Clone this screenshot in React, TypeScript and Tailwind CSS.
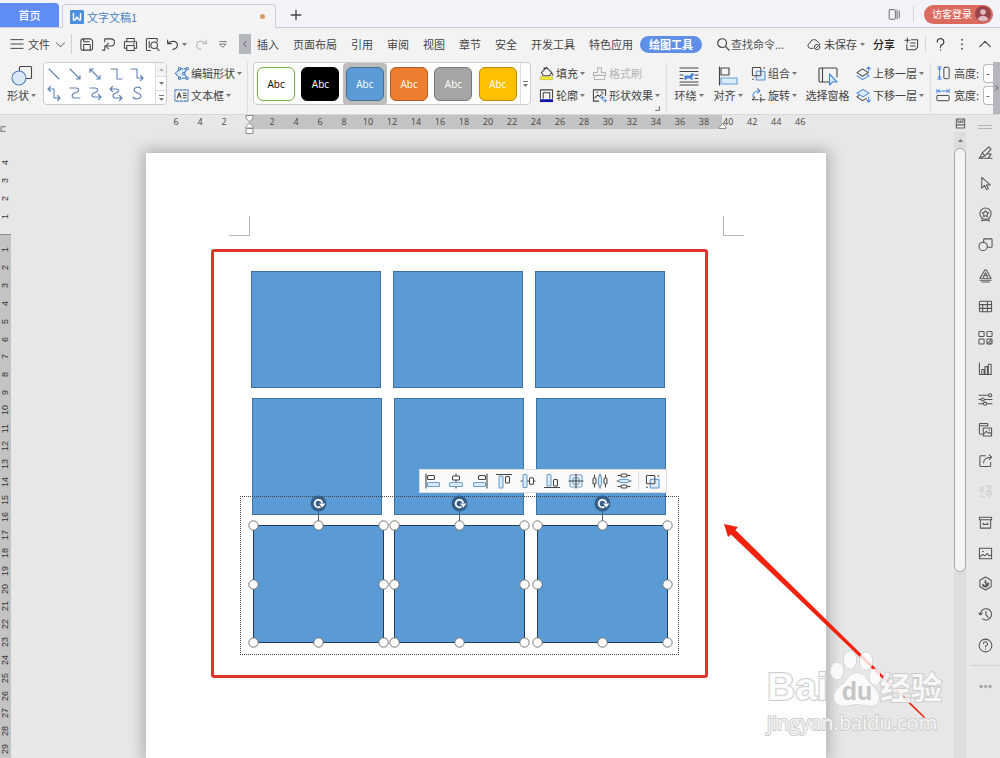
import { useState } from 'react';
import type { ReactNode } from 'react';
import clsx from 'clsx';

type IconProps = {
  children: ReactNode;
  className?: string;
  box?: string;
};

function Icon({ children, className = 'w-4 h-4', box = '0 0 16 16' }: IconProps) {
  return (
    <svg
      viewBox={box}
      className={clsx('shrink-0', className)}
      fill="none"
      stroke="currentColor"
      strokeWidth="1.1"
      strokeLinecap="round"
      strokeLinejoin="round"
      aria-hidden="true"
    >
      {children}
    </svg>
  );
}

function Caret({ className = 'text-[#777777]' }: { className?: string }) {
  return (
    <svg viewBox="0 0 5 3" className={clsx('w-[5px] h-[3px] shrink-0', className)} aria-hidden="true">
      <path d="M0 0h5L2.5 3z" fill="currentColor" />
    </svg>
  );
}

const menuTabs = ['插入', '页面布局', '引用', '审阅', '视图', '章节', '安全', '开发工具', '特色应用'];

const quickIcons = [
  {
    name: '保存',
    icon: (
      <>
        <path d="M2 4.500A2.500 2.500 0 0 1 4.500 2h8L14.500 4v8a2 2 0 0 1-2 2h-9A1.500 1.500 0 0 1 2 12.500z" />
        <path d="M5 14V8h7v6M5 2v3h6" />
      </>
    ),
  },
  {
    name: '输出为PDF',
    icon: (
      <>
        <path d="M4 5V2h6.500a3.800 3.800 0 0 1 0 7.600H5" />
        <path d="M8 6.500 5 9.600l3 3M1.500 14H4V9.600" />
      </>
    ),
  },
  {
    name: '打印',
    icon: (
      <>
        <path d="M4 5V1.500h8V5M4 12H1.500V5h13v7H12" />
        <path d="M4 9h8v5.500H4zM11 7.200h1" />
      </>
    ),
  },
  {
    name: '打印预览',
    icon: (
      <>
        <path d="M6 14.500H3A1.500 1.500 0 0 1 1.500 13V3A1.500 1.500 0 0 1 3 1.500h10V5M4.500 4.500v7" />
        <circle cx="9.800" cy="8.800" r="3.500" />
        <path d="m12.300 11.500 2.700 3" />
      </>
    ),
  },
];

const lineShapes = [
  'M3 3l10 10',
  'M3 3l10 10M9.500 13H13V9.500',
  'M3 3l10 10M9.500 13H13V9.500M6.500 3H3v3.500',
  'M3 3h6v10h5',
  'M2 3h6v9h6M11.500 9.500 14 12l-2.500 2.500',
  'M2 4h6v9h6M4.500 1.500 2 4l2.500 2.500M11.500 10.500 14 13l-2.500 2.500',
  'M3 3h6c4 0 3 4 0 4.500C4 8.500 4 13 8 13h5',
  'M3 3h5c4 0 3 4 0 4.500C4 8.500 4 12 8 12h6M11.500 9.500 14 12l-2.500 2.500',
  'M2 4h6c4 0 3 3.500 0 4C4 9 4 13 8 13h6M4.500 1.500 2 4l2.500 2.500M11.500 10.500 14 13l-2.500 2.500',
  'M12 4C11 1 5 2 5 5s7 3 7 6-7 4-8 1',
];

const styleSwatches = [
  'bg-white border-[#70ad47] text-black',
  'bg-black border-black text-white',
  'bg-[#5b9bd5] border-[#41719c] text-white',
  'bg-[#ed7d31] border-[#ae5a21] text-white',
  'bg-[#a5a5a5] border-[#787878] text-white',
  'bg-[#ffc000] border-[#bc8c00] text-white',
];

const sideTools = [
  { name: '样式', icon: <path d="M1 14.200h14M1.500 14 4.500 8.500 11.500 2l2.500 2.500-6.500 7zM4.500 8.500l3 3M10.500 9.500h3.500l-3 4.500" /> },
  { name: '选择', icon: <path d="M4 1.500v11.500l3-3 2 4.500 2-1-2-4h4z" /> },
  {
    name: '推荐',
    icon: (
      <>
        <circle cx="8" cy="7" r="6" />
        <path d="m8 3.800 1.100 1.900 2.200.5L9.800 7.900l.2 2.300-2-.9-2 .9.200-2.300-1.500-1.700 2.200-.5zM4.500 12l-.5 3 2.500-1h3l2.500 1-.5-3" />
      </>
    ),
  },
  {
    name: '形状',
    icon: (
      <>
        <circle cx="5.500" cy="10" r="4.500" />
        <path d="M6 5.500V3a1 1 0 0 1 1-1h7a1 1 0 0 1 1 1v7a1 1 0 0 1-1 1h-4" />
      </>
    ),
  },
  { name: '艺术字', icon: <path d="M7 2.500 2 11h12L9 2.500a1.200 1.200 0 0 0-2 0zM8 5l-2.500 4.500M8 5l2.500 4.500M6.500 8h3M2 13h12M4 15h8" /> },
  { name: '表格', icon: <path d="M2.500 2.500h11a1 1 0 0 1 1 1v9a1 1 0 0 1-1 1h-11a1 1 0 0 1-1-1v-9a1 1 0 0 1 1-1zM1.500 6h13M1.500 10h13M5 6v7.500M10 2.500v11" /> },
  {
    name: '图标',
    icon: (
      <>
        <rect x="1" y="1.500" width="5.500" height="5.500" rx="1" />
        <rect x="9.500" y="1.500" width="5.500" height="5.500" rx="1" />
        <rect x="1" y="9.500" width="5.500" height="5.500" rx="1" />
        <rect x="9.500" y="9.500" width="5.500" height="5.500" rx="1" />
        <path d="m10 14.500 4.500-4.500M12.500 15l2-2" />
      </>
    ),
  },
  { name: '图表', icon: <path d="M1.500 2v12.500h13M4 14V9h2.500v5M7.500 14V6H10v8M11 14V3.500h3V14" /> },
  {
    name: '设置',
    icon: (
      <>
        <path d="M1 3.500h10M1 8h2M7 8h8M1 12.500h4.500M9.500 12.500H15" />
        <circle cx="13" cy="3.500" r="1.700" />
        <circle cx="5" cy="8" r="1.700" />
        <circle cx="7.500" cy="12.500" r="1.700" />
      </>
    ),
  },
  { name: '图片', icon: <path d="M4 13H2.500a1 1 0 0 1-1-1V2.500a1 1 0 0 1 1-1h7a1 1 0 0 1 1 1V4M1.500 4h9M5.500 6.500h9V15h-9zM6 13l3-3 2 2 1.500-1 2 2M11.800 8.500h.6" /> },
  { name: '分享', icon: <path d="M8 3H3a1 1 0 0 0-1 1v9.500a1 1 0 0 0 1 1h9.500a1 1 0 0 0 1-1V10M6 10.500c0-4 3-6 8.500-6M12 2l2.500 2.500L12 7" /> },
  { name: '翻译', icon: <path d="M2 4h3.500v4.500H2V6h3.500M8 2h5v3M11.500 4 13 5.500 14.500 4M8.500 8h6v3.500h-6zM11.500 6v9M4 11v2.500h3" />, off: true },
  { name: '归档', icon: <path d="M1.500 2.500h13V5h-13zM2.500 5v9h11V5M5.500 8.500V10h5V8.500" /> },
  { name: '图库', icon: <path d="M1.500 2.500h13v11h-13zM2 11.500l3-2.500 2 1.500L10 8l2 2.500 2.500-1M5 5.800h.8" /> },
  {
    name: '健康',
    icon: (
      <>
        <path d="m8 1 6 3.500v7L8 15l-6-3.500v-7z" />
        <path d="M8 12c-3 0-4-2-3.500-3.500C6 8.500 7 9.500 8 11c0-2 1-3.500 3.500-4C12 9.500 10.500 12 8 12zM8 8.500 7 6.500 8 4l1 2.500z" fill="currentColor" strokeWidth="0.400" />
      </>
    ),
  },
  { name: '历史', icon: <path d="M2.500 8A6 6 0 1 1 5 12.700M.8 6.500 2.500 8.500l2-2M8.500 4.500v4l2.500 2.500" /> },
  { name: '帮助', icon: <path d="M8 1.200A6.800 6.800 0 1 1 8 14.800 6.800 6.800 0 0 1 8 1.200zM5.800 6A2.200 2.200 0 1 1 8 8.500v1M8 11.800v.3" /> },
];

const dark = '#454545';
const blue = '#6a9fd0';
const pale = '#dcebf9';

const alignTools = [
  { name: '左对齐', icon: <><path d="M2 1v14" stroke={dark} /><rect x="3.500" y="2.500" width="7" height="4" rx="1" stroke={dark} /><rect x="3.500" y="9.500" width="12" height="4" rx="1" stroke={blue} fill={pale} /></> },
  { name: '水平居中', icon: <><path d="M8 1v14" stroke={dark} /><rect x="4.500" y="3" width="7" height="4" rx="1" stroke={dark} fill="white" /><rect x="1.500" y="9.500" width="13" height="4" rx="1" stroke={blue} fill={pale} /></> },
  { name: '右对齐', icon: <><path d="M15 1v14" stroke={dark} /><rect x="6.500" y="2.500" width="7" height="4" rx="1" stroke={dark} /><rect x="1.500" y="9.500" width="12" height="4" rx="1" stroke={blue} fill={pale} /></> },
  { name: '顶端对齐', icon: <><path d="M.5 1.500h15" stroke={dark} /><rect x="3" y="3" width="4" height="12" rx="1" stroke={blue} fill={pale} /><rect x="9.500" y="3.500" width="4" height="6.500" rx="1" stroke={dark} /></> },
  { name: '垂直居中', icon: <><path d="M1 8h14" stroke={dark} /><rect x="3" y="1.500" width="4" height="13" rx="1" stroke={blue} fill={pale} /><rect x="9.500" y="4.800" width="4" height="6.500" rx="1" stroke={dark} fill="white" /></> },
  { name: '底端对齐', icon: <><path d="M.5 14.500h15" stroke={dark} /><rect x="3" y="1.500" width="4" height="11.500" rx="1" stroke={blue} fill={pale} /><rect x="9.500" y="6.500" width="4" height="6.500" rx="1" stroke={dark} /></> },
  { name: '中心对齐', icon: <><rect x="2" y="2" width="12" height="12" rx="1.500" stroke={blue} /><rect x="4.800" y="4.800" width="6.400" height="6.400" rx="1" stroke={blue} fill={pale} /><path d="M8 1v14M1 8h14" stroke={dark} /></> },
  { name: '横向分布', icon: <><path d="M2.500 2v12M8 1v14M13.500 2v12" stroke={dark} /><rect x="1" y="5" width="3" height="6" rx="1.200" stroke={dark} fill="white" /><rect x="6.500" y="3" width="3" height="10" rx="1.200" stroke={blue} fill={pale} /><rect x="12" y="5" width="3" height="6" rx="1.200" stroke={dark} fill="white" /></> },
  { name: '纵向分布', icon: <><path d="M2 2.500h12M1 8h14M2 13.500h12" stroke={dark} /><rect x="5" y="1" width="6" height="3" rx="1.200" stroke={dark} fill="white" /><rect x="3" y="6.500" width="10" height="3" rx="1.200" stroke={blue} fill={pale} /><rect x="5" y="12" width="6" height="3" rx="1.200" stroke={dark} fill="white" /></> },
];

function GroupIcon({ className }: { className?: string }) {
  return (
    <Icon className={className}>
      <rect x="5.500" y="5.500" width="9.500" height="9.500" rx="1" stroke="#5a8fd0" fill={pale} />
      <rect x="1.500" y="1.500" width="9" height="9" rx="1" stroke={dark} />
      <path d="M2 14.200h.2M14 2h.2" stroke={dark} strokeWidth="1.600" />
    </Icon>
  );
}

function TitleBar() {
  return (
    <header className="h-7 shrink-0 flex items-end bg-[#f2f4f9] border-b border-[#c9cfdb]">
      <button className="w-[59px] h-6 rounded-tr bg-[#608cf6] text-white font-medium">首页</button>
      <div className="w-[214px] h-6 -mb-px ml-[3px] pl-[7px] pr-[10px] flex items-center gap-[3px] rounded-t bg-[#f4f4f5] border border-b-0 border-[#c9cfdb]">
        <Icon className="w-[14px] h-[14px]">
          <rect width="16" height="16" rx="1" fill="#4a90e2" stroke="none" />
          <path d="M4 4v7.500h1.500L8 8l2.500 3.500H12V4" stroke="white" strokeWidth="1.600" />
        </Icon>
        <span className="flex-1 text-[#4a7fc4]">文字文稿1</span>
        <span className="w-[5px] h-[5px] rounded-full bg-[#df9a5e]" />
      </div>
      <button className="w-10 h-6 flex items-center justify-center text-[#444444]" aria-label="新建">
        <Icon className="w-[14px] h-[14px]">
          <path d="M8 2.500v11M2.500 8h11" strokeWidth="1.500" />
        </Icon>
      </button>
      <div className="flex-1" />
      <div className="h-6 mb-px pr-[7px] flex items-center">
        <button aria-label="界面布局" className="text-[#666666]">
          <Icon className="w-[14px] h-[14px]">
            <rect x="2.500" y="3" width="7" height="11" rx="1" />
            <path d="M11.500 3.500v10M14 4.500v8" />
          </Icon>
        </button>
        <span className="w-px h-4 ml-3 mr-[10px] bg-[#d3d6dd]" />
        <button className="w-[69px] h-[19px] pl-2 pr-[2px] flex items-center justify-between rounded-full bg-[#dc6b5f] text-white text-[10px]">
          访客登录
          <svg viewBox="0 0 16 16" className="w-4 h-4" aria-hidden="true">
            <circle cx="8" cy="8" r="8" fill="#99434c" />
            <circle cx="8" cy="6" r="2.800" fill="#e3b9bd" />
            <path d="M2.800 13.500C3.500 8.500 12.500 8.500 13.200 13.500a8 8 0 0 1-10.400 0z" fill="#e3b9bd" />
          </svg>
        </button>
      </div>
    </header>
  );
}

function MenuBar() {
  return (
    <nav className="h-8 shrink-0 flex items-center bg-[#f3f3f4]">
      <button className="w-[71px] pl-[10px] flex items-center gap-1">
        <Icon className="w-[14px] h-[14px]">
          <path d="M1 3h14M1 8h14M1 13h14" />
        </Icon>
        文件
        <Icon className="w-[9px] h-[9px] ml-[2px] text-[#777777]">
          <path d="m1 5 7 7 7-7" strokeWidth="1.800" />
        </Icon>
      </button>
      <span className="w-px h-5 bg-[#cfcfcf]" />
      <div className="pl-[7px] flex gap-[7px]">
        {quickIcons.map((q) => (
          <button key={q.name} aria-label={q.name}>
            <Icon className="w-[15px] h-[15px]">{q.icon}</Icon>
          </button>
        ))}
      </div>
      <button className="ml-[6px] flex items-center gap-[3px]" aria-label="撤销">
        <Icon className="w-[13px] h-[13px]">
          <path d="M2 2.500v4.500h4.500M2 7c3-4 12-4 12 1.500 0 3-3 5-5.500 5.500" strokeWidth="1.400" />
        </Icon>
        <Caret />
      </button>
      <button className="ml-2 text-[#bdbdbd]" aria-label="恢复">
        <Icon className="w-[13px] h-[13px]">
          <path d="M14 2.500v4.500H9.500M14 7C11 3 2 3 2 8.500c0 3 3 5 5.500 5.500" strokeWidth="1.400" />
        </Icon>
      </button>
      <button className="ml-[10px]" aria-label="自定义快速访问工具栏">
        <Icon className="w-[10px] h-[10px]">
          <path d="M3 4h10M3 8h10l-5 5z" />
        </Icon>
      </button>
      <button className="w-3 h-5 ml-[11px] flex items-center justify-center bg-[#b4b7be]" aria-label="向左滚动">
        <Icon className="w-2 h-2">
          <path d="M10 3 5 8l5 5" strokeWidth="1.600" />
        </Icon>
      </button>
      <div className="ml-[6px] flex items-center gap-[14px] whitespace-nowrap">
        {menuTabs.map((tab) => (
          <button key={tab}>{tab}</button>
        ))}
      </div>
      <button className="w-[62px] h-[17px] ml-[7px] flex items-center justify-center rounded-full bg-[#5f8fe6] text-white font-bold">
        绘图工具
      </button>
      <label className="ml-[14px] flex items-center gap-px">
        <Icon className="w-[14px] h-[14px]">
          <circle cx="7" cy="7" r="5" strokeWidth="1.400" />
          <path d="m11 11 4 4" strokeWidth="1.600" />
        </Icon>
        <input
          type="text"
          aria-label="查找命令"
          placeholder="查找命令..."
          className="w-14 bg-transparent outline-none placeholder:text-[#555555]"
        />
      </label>
      <div className="flex-1" />
      <button className="flex items-center gap-[3px]">
        <Icon className="w-[14px] h-[14px]">
          <path d="M7 13H4a3.200 3.200 0 0 1-.5-6.300A4.500 4.500 0 0 1 12 5.500c1.500.5 2.500 1.500 2.800 3" />
          <circle cx="11.500" cy="11.500" r="3" />
          <path d="m10.300 12.700 2.400-2.400" />
        </Icon>
        未保存
        <Caret />
      </button>
      <button className="ml-2 font-medium text-[#222222]">分享</button>
      <button className="ml-[9px]" aria-label="批注">
        <Icon className="w-[15px] h-[15px]">
          <path d="M8 3h6.500v8l-2.500 2.500H3V8M1 3.500h5M3.500 1v5M7 6.500h5M7 9.500h5" />
        </Icon>
      </button>
      <span className="w-px h-4 ml-[6px] bg-[#d6d6d6]" />
      <button className="w-7 flex justify-center" aria-label="帮助">
        <Icon className="w-[13px] h-[13px]">
          <path d="M4 5a4 4 0 1 1 5.500 3.500C8 9.200 8 9.800 8 11.500M8 14.500v.3" strokeWidth="1.500" />
        </Icon>
      </button>
      <button className="w-4 flex justify-center" aria-label="更多">
        <Icon className="w-3 h-3">
          <path d="M8 2v.5M8 8v.5M8 14v.5" strokeWidth="2.200" />
        </Icon>
      </button>
      <button className="w-[30px] flex justify-center" aria-label="收起功能区">
        <Icon className="w-3 h-3">
          <path d="m1 11.500 7-7 7 7" strokeWidth="1.500" />
        </Icon>
      </button>
    </nav>
  );
}

type RibbonButtonProps = {
  label: string;
  icon: ReactNode;
  caret?: boolean;
  disabled?: boolean;
};

function RibbonButton({ label, icon, caret = true, disabled }: RibbonButtonProps) {
  return (
    <button disabled={disabled} className="h-[22px] flex items-center gap-[2px] whitespace-nowrap disabled:text-[#b5b5b5]">
      {icon}
      {label}
      {caret && <Caret />}
    </button>
  );
}

function BigButton({ label, icon, caret = true }: RibbonButtonProps) {
  return (
    <button className="h-11 flex flex-col items-center whitespace-nowrap">
      <span className="h-[25px] pt-[2px] flex items-center">{icon}</span>
      <span className="flex items-center gap-[2px]">
        {label}
        {caret && <Caret />}
      </span>
    </button>
  );
}

function Ribbon() {
  const [swatch, setSwatch] = useState(2);

  return (
    <section className="h-[55px] shrink-0 pt-[2px] flex bg-[#f3f3f4] border-b border-[#d8d8d8]">
      <div className="w-[43px] shrink-0 flex justify-center">
        <BigButton
          label="形状"
          icon={
            <Icon className="w-[22px] h-[22px]" box="0 0 22 22">
              <rect x="8.500" y="1.500" width="12" height="12" rx="1" />
              <circle cx="8" cy="13" r="7" stroke="#4f81bd" fill="#dbe8f6" />
            </Icon>
          }
        />
      </div>

      {/* Line gallery */}
      <div className="w-[124px] h-[43px] shrink-0 flex rounded border border-[#cccccc] bg-white">
        <div className="flex-1 grid grid-cols-5 py-px pr-2">
          {lineShapes.map((d) => (
            <button key={d} aria-label="线条" className="flex items-center justify-center text-[#5f83b3]">
              <Icon className="w-4 h-4">
                <path d={d} />
              </Icon>
            </button>
          ))}
        </div>
        <div className="w-[11px] flex flex-col border-l border-[#dddddd] divide-y divide-[#dddddd]">
          <button aria-label="上一行" className="flex-1 flex items-center justify-center bg-[#f3f3f4]">
            <Caret className="rotate-180 text-[#b5b5b5]" />
          </button>
          <button aria-label="下一行" className="flex-1 flex items-center justify-center">
            <Caret />
          </button>
          <button aria-label="更多线条" className="flex-1 flex flex-col items-center justify-center gap-[2px]">
            <span className="w-[5px] h-px bg-[#777777]" />
            <Caret />
          </button>
        </div>
      </div>

      <div className="w-[81px] shrink-0 pl-[7px] border-r border-[#dedede]">
        <RibbonButton
          label="编辑形状"
          icon={
            <Icon className="w-[15px] h-[15px] text-[#3f75b5]">
              <path d="M6 3 1.500 8 6 13h8L10.500 8 14 3z" fill="#dcebf9" strokeDasharray="4 1.500" />
              <circle cx="6" cy="3" r="1.300" fill="white" />
              <circle cx="6" cy="13" r="1.300" fill="white" />
              <circle cx="14" cy="3" r="1.300" fill="white" />
              <circle cx="14" cy="13" r="1.300" fill="white" />
              <circle cx="10.500" cy="8" r="1.300" fill="white" />
            </Icon>
          }
        />
        <RibbonButton
          label="文本框"
          icon={
            <Icon className="w-[15px] h-[15px]">
              <rect x="1" y="2" width="14" height="12" strokeDasharray="3 1.500" stroke="#4f81bd" />
              <path d="m3.500 10.500 2-5.500 2 5.500M4.300 8.500h2.500M10 5.500h3M10 8h3M10 10.500h3" />
            </Icon>
          }
        />
      </div>

      {/* Style gallery */}
      <div className="w-[278px] h-[43px] shrink-0 ml-[5px] flex rounded border border-[#cccccc] bg-white">
        <div className="flex-1 flex items-center">
          {styleSwatches.map((style, i) => (
            <button
              key={style}
              onClick={() => setSwatch(i)}
              className={clsx('flex-1 h-[42px] flex items-center justify-center rounded-sm', swatch === i && 'bg-[#bdbdbd]')}
            >
              <span
                className={clsx(
                  "w-[38px] h-[34px] flex items-center justify-center rounded-md border text-[10px] [font-family:'Open_Sans',sans-serif]",
                  style,
                )}
              >
                Abc
              </span>
            </button>
          ))}
        </div>
        <button aria-label="更多样式" className="w-[10px] flex flex-col items-center justify-center gap-[2px] border-l border-[#dddddd]">
          <span className="w-[5px] h-px bg-[#777777]" />
          <Caret />
        </button>
      </div>

      <div className="w-[136px] shrink-0 pl-2 flex border-r border-[#dedede]">
        <div className="w-[53px]">
          <RibbonButton
            label="填充"
            icon={
              <Icon className="w-[15px] h-[15px]">
                <path d="M2.500 7 8 1.500 13.500 7l-2 3.500h-7zM5.500 4V1.500M13.500 7l1.500 3" />
                <rect x="1.500" y="11.500" width="13" height="3" fill="#f6ee28" stroke="#b8b02a" strokeWidth="0.600" />
              </Icon>
            }
          />
          <RibbonButton
            label="轮廓"
            icon={
              <Icon className="w-[15px] h-[15px]">
                <path d="M1.500 11V2h13v9M4.500 11V5h7v6" />
                <rect x="1" y="12" width="14" height="3" fill="#1414a8" stroke="none" />
              </Icon>
            }
          />
        </div>
        <div>
          <RibbonButton
            label="格式刷"
            caret={false}
            disabled
            icon={
              <Icon className="w-[15px] h-[15px]">
                <path d="M6 7V2h4v5h4.500v3h-13V7zM2.500 10v4.500h11V10" />
              </Icon>
            }
          />
          <RibbonButton
            label="形状效果"
            icon={
              <Icon className="w-[15px] h-[15px]">
                <path d="M7 14H1.500V2h13v6M3 10.500l3-3 2 1.500 2-2M5 4.500h1M10 4l2 2" />
                <path d="M11 8.500v4M9 10.500h4M14 12v3M12.500 13.500h3" stroke="#4a86d8" />
              </Icon>
            }
          />
          <button aria-label="形状设置" className="w-full h-[7px] flex justify-end">
            <Icon className="w-[5px] h-[5px]">
              <path d="M14 2v12H2" strokeWidth="2.500" />
            </Icon>
          </button>
        </div>
      </div>

      <div className="w-11 shrink-0 flex justify-center">
        <BigButton
          label="环绕"
          icon={
            <Icon className="w-5 h-5" box="0 0 20 20">
              <path d="M1 2h18M1 5.500h18M1 9h3M16 9h3M1 12.500h3M16 12.500h3M1 16h18M1 19h18" />
              <path d="M6 13.500V10h5l2-2.500 1.500 1-1.500 1.500v3.500L11.500 12h-4z" fill="#4a86d8" stroke="#4a86d8" />
            </Icon>
          }
        />
      </div>
      <div className="w-[34px] shrink-0 flex justify-center">
        <BigButton
          label="对齐"
          icon={
            <Icon className="w-5 h-5" box="0 0 20 20">
              <path d="M1.500 1v18" />
              <rect x="3" y="2" width="8" height="7" />
              <rect x="3" y="12" width="16" height="6" stroke="#6a9fd0" fill="#dcebf9" />
            </Icon>
          }
        />
      </div>
      <div className="w-[59px] shrink-0 pl-[6px]">
        <RibbonButton label="组合" icon={<GroupIcon className="w-[15px] h-[15px]" />} />
        <RibbonButton
          label="旋转"
          icon={
            <Icon className="w-[15px] h-[15px]">
              <path d="M2 9c0-4 3-6 7-6M7 .8 9.500 3 7 5.500" stroke="#4a86d8" />
              <path d="M7.500 12.500H1.500L4 9.500M9.500 12.500H15M10.500 7v1M10.500 10v5" />
            </Icon>
          }
        />
      </div>
      <div className="w-[47px] shrink-0 flex justify-center">
        <BigButton
          label="选择窗格"
          caret={false}
          icon={
            <Icon className="w-5 h-5" box="0 0 20 20">
              <path d="M11 16H2a1 1 0 0 1-1-1V3a1 1 0 0 1 1-1h16a1 1 0 0 1 1 1v8M4.500 2v14" />
              <path d="M11.500 8v11l3-3h4.500z" stroke="#4a86d8" fill="#dcebf9" />
            </Icon>
          }
        />
      </div>
      <div className="w-20 shrink-0 pl-[5px] border-r border-[#dedede]">
        <RibbonButton
          label="上移一层"
          icon={
            <Icon className="w-[15px] h-[15px]">
              <path d="m1 10.500 6 4 7-4-2-1.500" stroke="#4a86d8" fill="#dcebf9" />
              <path d="m7 3-6 4 6 4 6-4z" />
              <path d="M13.500 5.500V1M11.500 3l2-2 2 2" stroke="#4a86d8" />
            </Icon>
          }
        />
        <RibbonButton
          label="下移一层"
          icon={
            <Icon className="w-[15px] h-[15px]">
              <path d="M3 8 1 9.500l6 4 4-2.500" />
              <path d="M7.500 1.500 1 5.500l6.500 4 6.500-4z" stroke="#4a86d8" fill="#dcebf9" />
              <path d="M13.500 9.500V15M11.500 13l2 2 2-2" stroke="#4a86d8" />
            </Icon>
          }
        />
      </div>
      <div className="flex-1 min-w-0 pl-[5px]">
        <label className="h-[22px] flex items-center gap-1 whitespace-nowrap">
          <Icon className="w-[14px] h-[14px]">
            <path d="M4 1.500v13M2 1h4M2 15h4M2.500 4 4 2l1.500 2M2.500 12 4 14l1.500-2" stroke="#4a86d8" />
            <rect x="9" y="1.500" width="6" height="13" rx="1" />
          </Icon>
          高度:
          <input type="text" defaultValue="-" className="w-0 grow min-w-0 h-[19px] pl-[2px] bg-white border border-r-0 border-[#bbbbbb] rounded-l" />
        </label>
        <label className="h-[22px] flex items-center gap-1 whitespace-nowrap">
          <Icon className="w-[14px] h-[14px]">
            <path d="M1 1.500v4M15 1.500v4M2 3.500h12M4 2 2 3.500 4 5M12 2l2 1.500L12 5" stroke="#4a86d8" />
            <rect x="1" y="8.500" width="14" height="6" rx="1" />
          </Icon>
          宽度:
          <input type="text" defaultValue="-" className="w-0 grow min-w-0 h-[19px] pl-[2px] bg-white border border-r-0 border-[#bbbbbb] rounded-l" />
        </label>
      </div>
      <button aria-label="向右滚动" className="w-[7px] shrink-0 flex items-center justify-center bg-[#b4b7be]">
        <Icon className="w-[6px] h-[6px]">
          <path d="m4 2 7 6-7 6" strokeWidth="2" />
        </Icon>
      </button>
    </section>
  );
}

function VerticalNumber({ value }: { value: number }) {
  return <span className="rotate-180 leading-[11px] [writing-mode:vertical-rl]">{value}</span>;
}

function VerticalRuler() {
  return (
    <aside className="w-3 shrink-0 flex flex-col text-[9px] text-[#333333] [font-family:'Liberation_Sans',sans-serif]">
      <div className="h-[38px] pt-[11px]">
        <Icon className="w-[6px] h-[6px] text-[#777777]">
          <path d="M3 14V2h12M0 14h14" strokeWidth="3" />
        </Icon>
      </div>
      <div className="h-[81px] w-[11px] pb-2 flex flex-col">
        {[4, 3, 2, 1].map((n) => (
          <div key={n} className="flex-1 flex items-center">
            <VerticalNumber value={n} />
          </div>
        ))}
      </div>
      <div className="flex-1 min-h-0 w-[11px] pt-[6px] flex flex-col bg-[#c3c3c3] border-t border-[#8f8f8f]">
        {Array.from({ length: 29 }, (_, i) => (
          <div key={i} className="flex-1 min-h-0 flex items-center">
            <VerticalNumber value={i + 1} />
          </div>
        ))}
      </div>
    </aside>
  );
}

function HorizontalRuler() {
  return (
    <div className="relative h-[14px] pl-[18px] flex text-[9px] leading-[14px] text-center text-[#444444] [font-family:'Open_Sans',sans-serif]">
      <div className="w-[85px] flex">
        {[6, 4, 2].map((n) => (
          <span key={n} className="w-6">{n}</span>
        ))}
      </div>
      <div className="w-[473px] pl-[11px] flex bg-[#c3c3c3]">
        {Array.from({ length: 19 }, (_, i) => (
          <span key={i} className="w-6">{(i + 1) * 2}</span>
        ))}
      </div>
      <div className="pl-px flex text-left">
        {[40, 42, 44, 46].map((n) => (
          <span key={n} className="w-6">{n}</span>
        ))}
      </div>
      <svg viewBox="0 0 9 19" className="absolute left-[99px] top-0 w-[9px] h-[19px]" aria-hidden="true">
        <path d="M1 .5h7v2.500L4.500 7 1 3zM4.500 8 8 11.500v1.500H1v-1.500zM1 13.500h7v5H1z" fill="white" stroke="#8a8a8a" />
      </svg>
      <svg viewBox="0 0 9 6" className="absolute left-[572px] top-2 w-[9px] h-[6px]" aria-hidden="true">
        <path d="M4.500.5 8 4v1.500H1V4z" fill="white" stroke="#8a8a8a" />
      </svg>
    </div>
  );
}

// positions on the page, measured from its top left corner
const rectangles = [
  'left-[105px] top-[118px]',
  'left-[247px] top-[118px]',
  'left-[389px] top-[118px]',
  'left-[106px] top-[245px]',
  'left-[248px] top-[245px]',
  'left-[390px] top-[245px]',
];

const selectedRectangles = ['left-[107px] top-[372px]', 'left-[248px] top-[372px]', 'left-[391px] top-[372px]'];

const handles = [
  [0, 0], [65, 0], [130, 0],
  [0, 59], [130, 59],
  [0, 117], [65, 117], [130, 117],
];

function SelectedRectangle({ place }: { place: string }) {
  return (
    <div className={clsx('absolute w-[131px] h-[118px] bg-[#5b9bd5] border border-[#1f3c59]', place)}>
      <svg viewBox="-6 -30 142 154" className="absolute -left-[7px] -top-[31px] w-[142px] h-[154px] max-w-none" aria-hidden="true">
        <path d="M65.500-14V0" stroke="#41607d" />
        <circle cx="65.500" cy="-21.500" r="8" fill="#365f88" />
        <path d="M67.500-18.200a3.800 3.800 0 1 1 1.700-3.800" fill="none" stroke="white" strokeWidth="1.800" />
        <path d="M66-21.500h6.500l-3.200 4z" fill="white" />
        {handles.map(([x, y]) => (
          <circle key={`${x}-${y}`} cx={x + 0.5} cy={y + 0.5} r="4.700" fill="white" stroke="#666666" strokeWidth="0.900" />
        ))}
      </svg>
    </div>
  );
}

function AlignToolbar() {
  return (
    <div className="absolute left-[273px] top-[316px] w-[248px] h-6 flex items-center bg-[#fafafa] border border-[#dddddd]">
      {alignTools.map((tool) => (
        <button key={tool.name} aria-label={tool.name} className="w-6 flex justify-center">
          <Icon className="w-4 h-4">{tool.icon}</Icon>
        </button>
      ))}
      <span className="w-px h-5 ml-[2px] bg-[#e0e0e0]" />
      <button aria-label="组合" className="flex-1 flex justify-center">
        <GroupIcon className="w-[15px] h-[15px]" />
      </button>
    </div>
  );
}

function Watermark() {
  return (
    <div className="absolute left-[621px] top-[496px] text-white/80 whitespace-nowrap [font-family:'Liberation_Sans','Noto_Sans_CJK_SC',sans-serif] [-webkit-text-stroke:2px_#cdcdcd] [paint-order:stroke_fill]">
      <div className="h-[60px] flex items-end">
        <span className="w-[63px] text-[39px] leading-[44px] font-bold">Bai</span>
        <svg viewBox="0 0 50 60" className="w-[50px] h-[60px]" aria-hidden="true">
          <g fill="white" fillOpacity="0.8" stroke="#c9c9c9" strokeWidth="1">
            <ellipse cx="7" cy="22" rx="6.500" ry="8.500" />
            <ellipse cx="20" cy="11" rx="6.500" ry="9" />
            <ellipse cx="36" cy="12" rx="6.500" ry="9" />
            <ellipse cx="45" cy="28" rx="5.500" ry="8" />
            <path d="M27 24c-7 0-9 6-13 10-4 3-10 7-10 14 0 6 4 9 9 9 5 0 8-1.500 14-1.500S36 57 41 57c5 0 8-4 8-9 0-6-5-9-9-14-4-4-6-10-13-10z" />
          </g>
          <text x="27" y="51" textAnchor="middle" fontSize="25" fontWeight="700" fill="#c6c6c6" stroke="none">
            du
          </text>
        </svg>
        <span className="text-[31px] leading-[40px] font-bold">经验</span>
      </div>
      <div className="pt-[2px] text-[20px] leading-6 [font-family:'Open_Sans',sans-serif]">jingyan.baidu.com</div>
    </div>
  );
}

function DocumentPage() {
  return (
    <div className="relative flex-1 mt-6 bg-white shadow-[0_0_14px_3px_rgba(0,0,0,0.25)]">
      <span className="absolute left-[83px] top-[63px] w-[21px] h-5 border-r border-b border-[#b5b5b5]" />
      <span className="absolute left-[577px] top-[63px] w-[21px] h-5 border-l border-b border-[#b5b5b5]" />

      {rectangles.map((place) => (
        <div key={place} className={clsx('absolute w-[130px] h-[117px] bg-[#5b9bd5] border border-[#41719c]', place)} />
      ))}
      <div className="absolute left-[94px] top-[343px] w-[439px] h-[159px] border border-dotted border-[#444444]" />
      {selectedRectangles.map((place) => (
        <SelectedRectangle key={place} place={place} />
      ))}
      <AlignToolbar />

      {/* Callout */}
      <div className="absolute left-[65px] top-[96px] w-[497px] h-[429px] border-[3px] border-[#e0352c] rounded-[3px] pointer-events-none" />
      <svg viewBox="0 0 204 196" className="absolute left-[578px] top-[371px] w-[204px] h-[196px]" aria-hidden="true">
        <path d="M0 0 14 3l-2.500 3L201 193l-1 1L7 10.500 4 13z" fill="#f0230f" />
      </svg>
      <Watermark />
    </div>
  );
}

function ScrollBar() {
  return (
    <div className="w-3 shrink-0 flex flex-col items-center">
      <button aria-label="显示标尺" className="h-[17px] flex items-center text-[#666666]">
        <Icon className="w-[11px] h-[11px]">
          <rect x="2" y="1.500" width="12" height="13" strokeWidth="1.600" />
          <path d="M4.500 2v4h7V2M2 10h12M8 4v2" strokeWidth="1.600" />
        </Icon>
      </button>
      <div className="flex-1 min-h-0 w-full flex flex-col items-center bg-[#dddddd]">
        <button aria-label="向上" className="h-4 flex items-center">
          <Caret className="rotate-180 text-[#777777]" />
        </button>
        <div className="w-full h-[424px] rounded-full bg-[#f5f5f5] border border-[#ababab]" />
      </div>
    </div>
  );
}

function SideTools() {
  return (
    <aside className="w-[34px] shrink-0 pl-1 flex flex-col items-center text-[#555555]">
      <div className="h-[30px] pt-[10px] flex flex-col gap-[2px]">
        <span className="w-[14px] h-px bg-[#b5b5b5]" />
        <span className="w-[14px] h-px bg-[#b5b5b5]" />
      </div>
      <div className="h-[508px] flex flex-col justify-between">
        {sideTools.map((tool) => (
          <button key={tool.name} aria-label={tool.name} disabled={tool.off} className="disabled:text-[#d0d0d0]">
            <Icon className="w-[15px] h-[15px]">{tool.icon}</Icon>
          </button>
        ))}
      </div>
      <span className="w-full h-px mt-3 bg-[#d3d3d3]" />
      <button aria-label="更多" className="h-10">
        <Icon className="w-[13px] h-[13px] text-[#8a8a8a]">
          <circle cx="2.500" cy="8" r="1.500" />
          <circle cx="8" cy="8" r="1.500" />
          <circle cx="13.500" cy="8" r="1.500" />
        </Icon>
      </button>
    </aside>
  );
}

export default function App() {
  return (
    <div className="h-screen flex flex-col overflow-hidden bg-[#e7e7e7] text-[11px] leading-4 text-[#444444] [font-family:'Noto_Sans_CJK_SC',sans-serif]">
      <TitleBar />
      <MenuBar />
      <Ribbon />
      <main className="flex-1 min-h-0 flex">
        <VerticalRuler />
        <div className="flex-1 min-w-0 pl-[6px] flex justify-center overflow-hidden">
          <div className="w-[680px] shrink-0 flex flex-col">
            <HorizontalRuler />
            <DocumentPage />
          </div>
        </div>
        <ScrollBar />
        <SideTools />
      </main>
    </div>
  );
}
